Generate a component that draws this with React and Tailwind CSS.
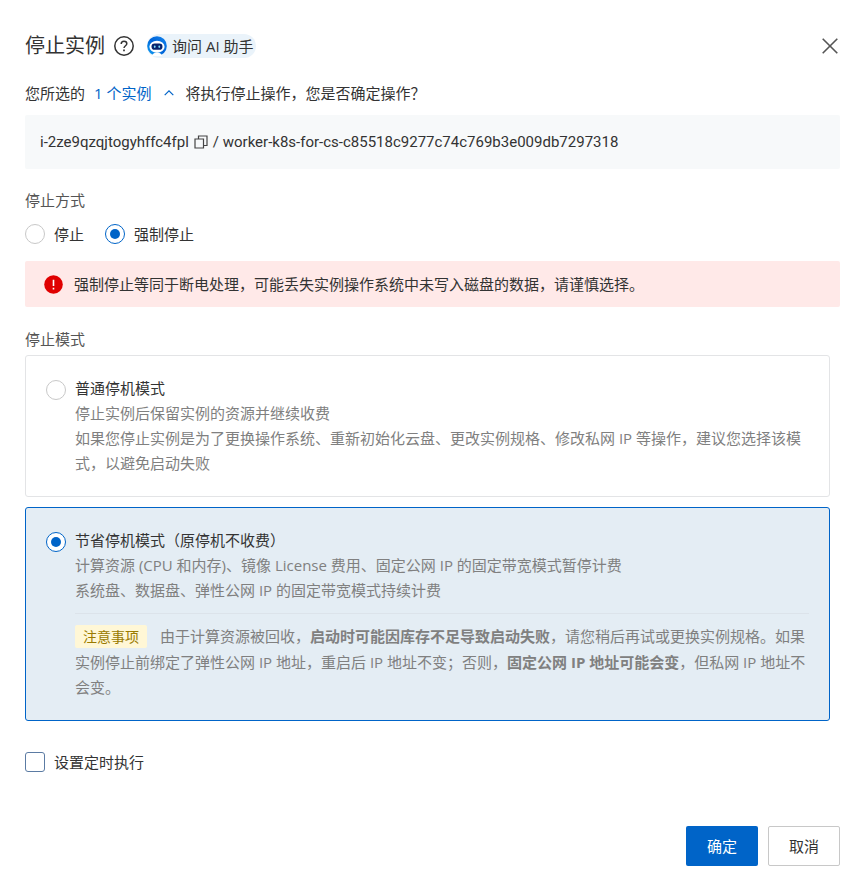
import { useState } from "react";

const radioClass =
  "grid size-5 shrink-0 appearance-none place-items-center rounded-full border border-[#c8c8c8] bg-white before:size-[10px] before:rounded-full checked:border-[#0064c8] checked:before:bg-[#0064c8]";

function HelpIcon() {
  return (
    <svg className="size-5" viewBox="0 0 20 20" fill="none" stroke="#333" strokeWidth="1.5" aria-hidden="true">
      <circle cx="10" cy="10" r="9.2" />
      <path d="M7.2 8.1C7.2 6.3 8.3 5.3 10 5.3s2.8 1 2.8 2.5c0 1.9-2.8 2.1-2.8 4.3" />
      <path d="M10 13.6v1.7" strokeWidth="1.7" />
    </svg>
  );
}

function RobotIcon() {
  return (
    <svg className="size-5" viewBox="0 0 20 20" aria-hidden="true">
      <defs>
        <linearGradient id="robot-ring" x1="0" y1="1" x2="1" y2="0">
          <stop offset="0" stopColor="#12a5f5" />
          <stop offset="0.5" stopColor="#0064d8" />
          <stop offset="1" stopColor="#1687f0" />
        </linearGradient>
      </defs>
      <circle cx="10" cy="10" r="9.8" fill="url(#robot-ring)" />
      <ellipse cx="10" cy="10.8" rx="7.6" ry="6" fill="#fff" />
      <path d="M5 20c.3-2.200 2.200-3.400 5-3.400s4.700 1.200 5 3.400z" fill="#fff" />
      <rect x="4.500" y="7.600" width="11" height="6.200" rx="3.100" fill="#08236b" />
      <rect x="6.900" y="9.400" width="1.700" height="2.500" rx=".8" fill="#7fe0ff" />
      <rect x="11.400" y="9.400" width="1.700" height="2.500" rx=".8" fill="#7fe0ff" />
    </svg>
  );
}

function CloseIcon() {
  return (
    <svg className="size-5" viewBox="0 0 20 20" fill="none" stroke="#555" strokeWidth="1.6" aria-hidden="true">
      <path d="M2.700 2.700l14.600 14.600M17.300 2.700L2.700 17.300" />
    </svg>
  );
}

function CopyIcon() {
  return (
    <svg className="size-[14px]" viewBox="0 0 14 14" fill="none" stroke="#444" strokeWidth="1.200" aria-hidden="true">
      <path d="M1 4h8.500v9H1zM4.500 4V1H13v9.500H9.500" />
    </svg>
  );
}

function ChevronIcon({ open }) {
  return (
    <svg
      className={open ? "h-3 w-[10px]" : "h-3 w-[10px] rotate-180"}
      viewBox="0 0 10 12"
      fill="none"
      stroke="#0064c8"
      strokeWidth="1.200"
      aria-hidden="true"
    >
      <path d="M.7 8.200L5 3.900l4.300 4.300" />
    </svg>
  );
}

function AlertIcon() {
  return (
    <svg className="size-[19px] shrink-0" viewBox="0 0 19 19" aria-hidden="true">
      <circle cx="9.500" cy="9.500" r="9.300" fill="#e00000" />
      <path d="M9.500 4.800v6.200M9.500 12.800v1.600" stroke="#fff" strokeWidth="1.600" />
    </svg>
  );
}

function ModeCard({ id, title, defaultChecked, children }) {
  return (
    <label
      htmlFor={id}
      className="flex gap-[9px] rounded-[3px] border border-[#e3e4e6] bg-white p-5 has-checked:border-[#0064c8] has-checked:bg-[#e4edf4]"
    >
      <span className="pt-1">
        <input id={id} type="radio" name="mode" defaultChecked={defaultChecked} className={radioClass} />
      </span>
      <span className="min-w-0 flex-1 leading-[25px] text-[#808080]">
        <span className="block text-[#333]">{title}</span>
        {children}
      </span>
    </label>
  );
}

export default function App() {
  const [open, setOpen] = useState(true);

  return (
    <main
      role="dialog"
      aria-labelledby="dialog-title"
      className="bg-white pt-8 pr-6 pb-1 pl-[25px] font-['Open_Sans','Noto_Sans_CJK_SC',sans-serif] text-[15px] leading-6 text-[#333]"
    >
      <header className="flex h-7 items-center">
        <h1 id="dialog-title" className="text-xl leading-7">停止实例</h1>
        <button type="button" aria-label="帮助" className="ml-[9px]">
          <HelpIcon />
        </button>
        <button type="button" className="ml-[13px] flex h-6 items-center gap-[5px] rounded-full bg-[#eaf3fa] pr-[3px]">
          <RobotIcon />
          询问 AI 助手
        </button>
        <button type="button" aria-label="关闭" className="ml-auto">
          <CloseIcon />
        </button>
      </header>

      <p className="mt-[21px] flex items-center">
        您所选的
        <button
          type="button"
          aria-expanded={open}
          onClick={() => setOpen(!open)}
          className="mr-3 ml-[9px] flex items-center gap-3 text-[#0064c8]"
        >
          1 个实例
          <ChevronIcon open={open} />
        </button>
        将执行停止操作，您是否确定操作？
      </p>

      {open && (
        <div className="mt-[10px] flex items-center rounded-[2px] bg-[#f7f9fa] p-[15px] font-[Roboto,sans-serif]">
          <span>i-2ze9qzqjtogyhffc4fpl</span>
          <button type="button" aria-label="复制" className="mx-[5px]">
            <CopyIcon />
          </button>
          <span>/ worker-k8s-for-cs-c85518c9277c74c769b3e009db7297318</span>
        </div>
      )}

      <fieldset className="mt-[19px]">
        <legend className="text-[#555]">停止方式</legend>
        <div className="mt-[10px] flex gap-[21px]">
          <label className="flex items-center gap-[9px]">
            <input type="radio" name="method" className={radioClass} />
            停止
          </label>
          <label className="flex items-center gap-[9px]">
            <input type="radio" name="method" defaultChecked className={radioClass} />
            强制停止
          </label>
        </div>
      </fieldset>

      <div role="alert" className="mt-[15px] flex items-center gap-[11px] rounded-[2px] bg-[#ffe9e8] py-[11px] pr-5 pl-[19px]">
        <AlertIcon />
        强制停止等同于断电处理，可能丢失实例操作系统中未写入磁盘的数据，请谨慎选择。
      </div>

      <fieldset className="mt-5">
        <legend className="text-[#555]">停止模式</legend>
        <div className="mt-1 mr-[10px] flex flex-col gap-[10px]">
          <ModeCard id="mode-normal" title="普通停机模式">
            <span className="block">停止实例后保留实例的资源并继续收费</span>
            <span className="block">
              如果您停止实例是为了更换操作系统、重新初始化云盘、更改实例规格、修改私网 IP 等操作，建议您选择该模式，以避免启动失败
            </span>
          </ModeCard>
          <ModeCard id="mode-saving" title="节省停机模式（原停机不收费）" defaultChecked>
            <span className="block">计算资源 (CPU 和内存)、镜像 License 费用、固定公网 IP 的固定带宽模式暂停计费</span>
            <span className="block">系统盘、数据盘、弹性公网 IP 的固定带宽模式持续计费</span>
            <span className="mt-[10px] block border-t border-[#dce3ea] pt-[10px]">
              <span className="mr-[13px] mb-[2px] inline-block rounded-[2px] bg-[#fff7d6] px-2 text-sm leading-[23px] text-[#997a00]">
                注意事项
              </span>
              由于计算资源被回收，<strong>启动时可能因库存不足导致启动失败</strong>
              ，请您稍后再试或更换实例规格。如果实例停止前绑定了弹性公网 IP 地址，重启后 IP 地址不变；否则，
              <strong>固定公网 IP 地址可能会变</strong>，但私网 IP 地址不会变。
            </span>
          </ModeCard>
        </div>
      </fieldset>

      <label className="mt-[29px] flex items-center gap-[9px]">
        <input
          type="checkbox"
          className="size-5 appearance-none rounded-[3px] border border-[#5b7ba3] bg-white checked:bg-[#0064c8]"
        />
        设置定时执行
      </label>

      <footer className="mt-[52px] flex justify-end gap-[10px]">
        <button type="button" className="h-10 w-[72px] rounded-[2px] bg-[#0064c8] text-white">
          确定
        </button>
        <button type="button" className="h-10 w-[72px] rounded-[2px] border border-[#c8c8c8] bg-white">
          取消
        </button>
      </footer>
    </main>
  );
}
